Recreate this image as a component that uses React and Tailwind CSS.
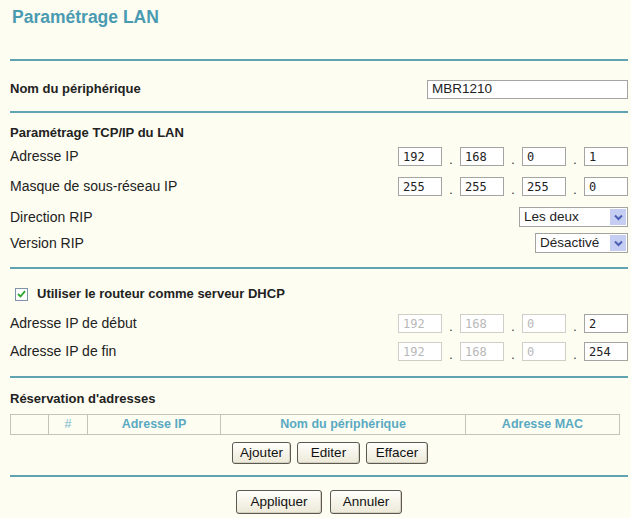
import React from 'react';

const Line = ({ mt }) => <div className={`h-[2px] bg-[#5fa4b0] ${mt}`} />;

const IpBox = ({ value, disabled }) => (
    <div
        className={`w-[44px] h-[19px] border bg-white flex items-center pl-[4px] font-['DejaVu_Sans_Mono',monospace] text-[12px] ${
            disabled ? 'border-[#cfcfc8] text-[#b8b8b8]' : 'border-[#a4a4a0] text-[#222]'
        }`}
    >
        {value}
    </div>
);

const IpFields = ({ values, disabled = [] }) => (
    <div className="flex items-center">
        {values.map((v, i) => (
            <React.Fragment key={i}>
                {i > 0 && <span className="w-[18px] text-center text-[12px] leading-none pt-[6px]">.</span>}
                <IpBox value={v} disabled={disabled[i]} />
            </React.Fragment>
        ))}
    </div>
);

const Select = ({ value, width }) => (
    <div className={`${width} h-[20px] border border-[#a4a4a0] bg-white flex items-center justify-between`}>
        <span className="pl-[4px] text-[13.5px]">{value}</span>
        <span className="w-[16px] h-[16px] mr-[1px] bg-[#c6cdf3] flex items-center justify-center">
            <svg width="9" height="7" viewBox="0 0 9 7">
                <path d="M1 1.5 L4.5 5 L8 1.5" fill="none" stroke="#4a5fb4" strokeWidth="2" />
            </svg>
        </span>
    </div>
);

const Btn = ({ children, width, h = 'h-[22px]' }) => (
    <button
        className={`${width} ${h} rounded-[3px] border border-[#5a5a50] bg-gradient-to-b from-[#fffffb] to-[#ece9d8] text-[13.5px] text-[#111] shadow-[inset_-1px_-1px_0_#d6d0c0]`}
    >
        {children}
    </button>
);

export default function App() {
    return (
        <div className="w-[631px] h-[518px] overflow-hidden bg-[#fdfdf1] text-[#222] font-['Liberation_Sans',Arial,sans-serif] text-[14px]">
            <div className="pl-[10px] pr-[3px]">
                <h1 className="h-[59px] pt-[7px] pl-[2px] text-[17.5px] leading-[20px] font-bold text-[#4a9bb2]">
                    Paramétrage LAN
                </h1>
                <Line />

                {/* Nom du périphérique */}
                <div className="mt-[18px] h-[20px] flex items-center justify-between">
                    <span className="font-bold text-[13px]">Nom du périphérique</span>
                    <div className="w-[201px] h-[19px] border border-[#a4a4a0] bg-white flex items-center pl-[4px] text-[13.5px]">
                        MBR1210
                    </div>
                </div>
                <Line mt="mt-[12px]" />

                {/* TCP/IP */}
                <div className="mt-[10px] h-[20px] flex items-center font-bold text-[13px]">Paramétrage TCP/IP du LAN</div>
                <div className="mt-[4px] h-[19px] flex items-center justify-between">
                    <span>Adresse IP</span>
                    <IpFields values={['192', '168', '0', '1']} />
                </div>
                <div className="mt-[11px] h-[19px] flex items-center justify-between">
                    <span>Masque de sous-réseau IP</span>
                    <IpFields values={['255', '255', '255', '0']} />
                </div>
                <div className="mt-[11px] h-[20px] flex items-center justify-between">
                    <span>Direction RIP</span>
                    <Select value="Les deux" width="w-[109px]" />
                </div>
                <div className="mt-[6px] h-[20px] flex items-center justify-between">
                    <span>Version RIP</span>
                    <Select value="Désactivé" width="w-[93px]" />
                </div>
                <Line mt="mt-[14px]" />

                {/* DHCP */}
                <div className="mt-[15px] h-[20px] flex items-center gap-[9px] pl-[5px]">
                    <span className="w-[13px] h-[13px] border border-[#7f92a6] bg-white flex items-center justify-center">
                        <svg width="9" height="8" viewBox="0 0 9 8">
                            <path d="M1 4 L3.5 6.5 L8 1.2" fill="none" stroke="#2aa52a" strokeWidth="1.8" />
                        </svg>
                    </span>
                    <span className="font-bold text-[13px]">Utiliser le routeur comme serveur DHCP</span>
                </div>
                <div className="mt-[10px] h-[19px] flex items-center justify-between">
                    <span>Adresse IP de début</span>
                    <IpFields values={['192', '168', '0', '2']} disabled={[true, true, true, false]} />
                </div>
                <div className="mt-[9px] h-[19px] flex items-center justify-between">
                    <span>Adresse IP de fin</span>
                    <IpFields values={['192', '168', '0', '254']} disabled={[true, true, true, false]} />
                </div>
                <Line mt="mt-[15px]" />

                {/* Réservation */}
                <div className="mt-[11px] h-[20px] flex items-center font-bold text-[13px]">Réservation d'adresses</div>
                <div className="mt-[5px] w-[610px] h-[21px] grid grid-cols-[38px_39px_133px_245px_1fr] border border-[#c4c4bc] text-[12.5px] font-bold text-[#5aa9c2]">
                    <div className="border-r border-[#c4c4bc]" />
                    <div className="border-r border-[#c4c4bc] flex items-center justify-center text-[#9fc9d6]">#</div>
                    <div className="border-r border-[#c4c4bc] flex items-center justify-center">Adresse IP</div>
                    <div className="border-r border-[#c4c4bc] flex items-center justify-center">Nom du périphérique</div>
                    <div className="flex items-center justify-center">Adresse MAC</div>
                </div>
                <div className="mt-[7px] flex gap-[6px] pl-[222px]">
                    <Btn width="w-[59px]">Ajouter</Btn>
                    <Btn width="w-[63px]">Editer</Btn>
                    <Btn width="w-[62px]">Effacer</Btn>
                </div>
                <Line mt="mt-[11px]" />

                <div className="mt-[13px] flex gap-[8px] pl-[226px]">
                    <Btn width="w-[86px]" h="h-[24px]">Appliquer</Btn>
                    <Btn width="w-[72px]" h="h-[24px]">Annuler</Btn>
                </div>
            </div>
        </div>
    );
}
